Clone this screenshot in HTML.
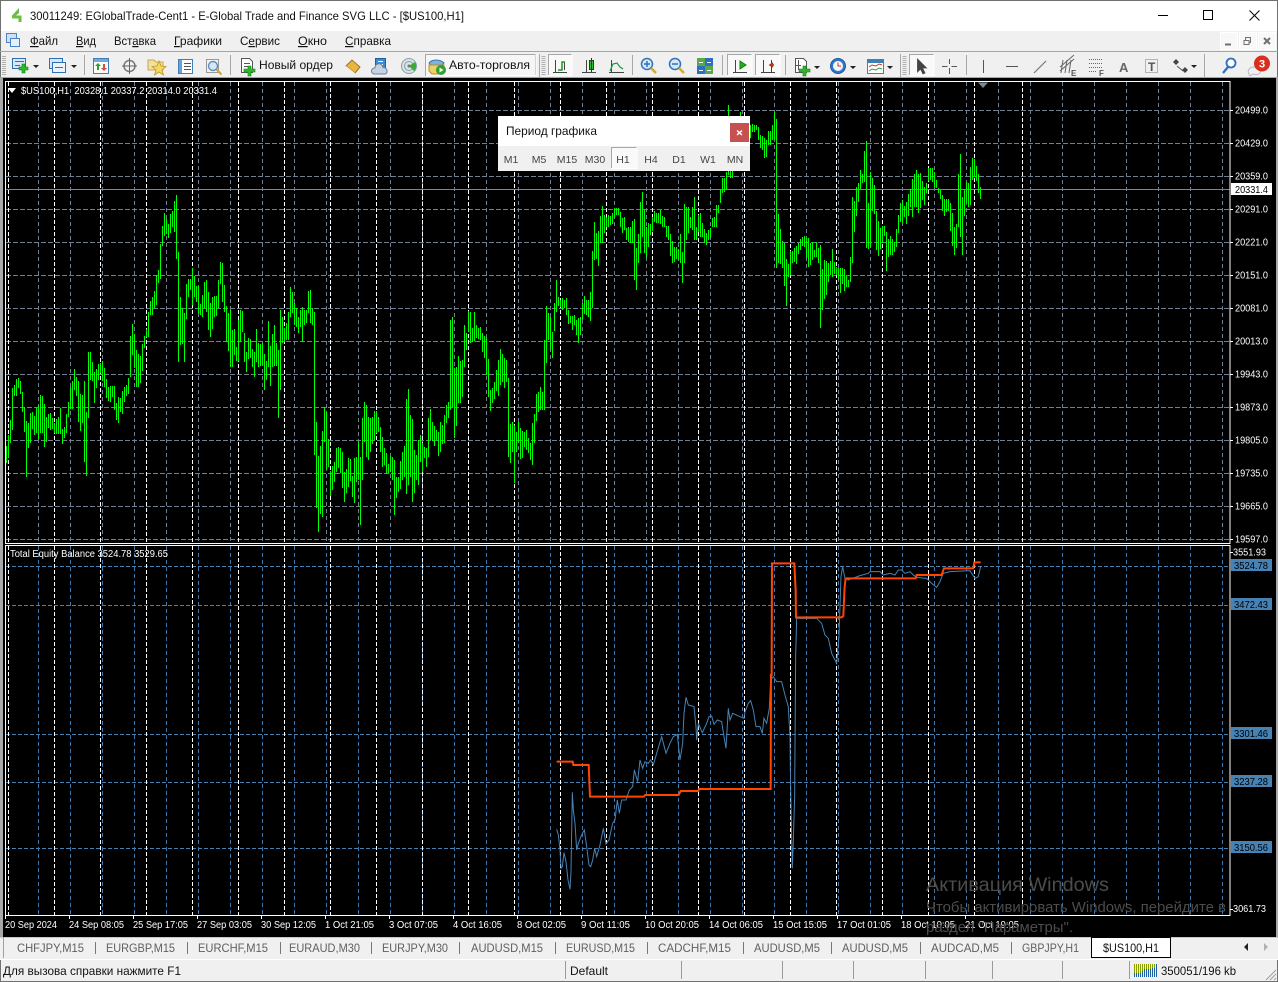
<!DOCTYPE html>
<html lang="ru">
<head>
<meta charset="utf-8">
<title>MetaTrader</title>
<style>
html,body{margin:0;padding:0;background:#f0f0f0;width:1278px;height:982px;overflow:hidden}
svg{display:block;position:absolute;left:0;top:0}
text{font-family:"Liberation Sans","Noto Sans CJK SC",sans-serif;white-space:pre}
.m{font-size:12px;fill:#111}
.p{font-size:10px;fill:#fff}
.k{font-size:10px;fill:#000}
.tab{font-size:12px;fill:#606060}
.per{font-size:10.5px;fill:#444;text-anchor:middle}
.ar{fill:#222}
</style>
</head>
<body>
<svg width="1278" height="982" viewBox="0 0 1278 982" xmlns="http://www.w3.org/2000/svg">
<!-- window chrome -->
<rect width="1278" height="982" fill="#f0f0f0"/>
<rect width="1278" height="31" fill="#fff"/>
<rect width="1278" height="1" fill="#707070"/>
<rect width="1" height="982" fill="#707070"/>
<rect x="1277" width="1" height="982" fill="#707070"/>
<path d="M12 15.500L19 8v5l-3 2.500h5.500V22h-3v-3.500H12z" fill="#6cbe45"/>
<text x="30" y="20" class="m" font-size="12" textLength="434" lengthAdjust="spacingAndGlyphs">30011249: EGlobalTrade-Cent1 - E-Global Trade and Finance SVG LLC - [$US100,H1]</text>
<path d="M1158 15.500h10" stroke="#000"/>
<rect x="1203.500" y="10.500" width="9" height="9" fill="none" stroke="#000"/>
<path d="M1249.500 10.500l10 10M1259.500 10.500l-10 10" stroke="#000"/>
<!-- menu -->
<rect x="6.500" y="33.500" width="10" height="9" fill="#cfe0f4" stroke="#4b82c4"/>
<rect x="10.500" y="38.500" width="9" height="8" fill="#e6f0fb" stroke="#4b82c4"/>
<g class="m">
<text x="30" y="45" class="m" textLength="28" lengthAdjust="spacingAndGlyphs"><tspan text-decoration="underline">Ф</tspan>айл</text>
<text x="76" y="45" class="m" textLength="20" lengthAdjust="spacingAndGlyphs"><tspan text-decoration="underline">В</tspan>ид</text>
<text x="114" y="45" class="m" textLength="42" lengthAdjust="spacingAndGlyphs">Вст<tspan text-decoration="underline">а</tspan>вка</text>
<text x="174" y="45" class="m" textLength="48" lengthAdjust="spacingAndGlyphs"><tspan text-decoration="underline">Г</tspan>рафики</text>
<text x="240" y="45" class="m" textLength="40" lengthAdjust="spacingAndGlyphs">С<tspan text-decoration="underline">е</tspan>рвис</text>
<text x="298" y="45" class="m" textLength="29" lengthAdjust="spacingAndGlyphs"><tspan text-decoration="underline">О</tspan>кно</text>
<text x="345" y="45" class="m" textLength="46" lengthAdjust="spacingAndGlyphs"><tspan text-decoration="underline">С</tspan>правка</text>
</g>
<g fill="#f8f8f8" stroke="#fff"><rect x="1220.500" y="32.500" width="17" height="17"/><rect x="1239.500" y="32.500" width="17" height="17"/><rect x="1258.500" y="32.500" width="17" height="17"/></g>
<path d="M1225 44.500h6" stroke="#707070" stroke-width="2"/>
<rect x="1245.500" y="37.500" width="5" height="5" fill="none" stroke="#707070"/><rect x="1244" y="40.500" width="5" height="4" fill="#f8f8f8" stroke="#707070"/>
<path d="M1264 38l6 6M1270 38l-6 6" stroke="#707070" stroke-width="2"/>
<rect y="51" width="1278" height="1" fill="#a5a5a5"/>
<rect y="77" width="1278" height="1" fill="#a5a5a5"/>
<!-- toolbar separators & grips -->
<path d="M84.500 55v20M230.500 55v20M539.500 54v23M632.500 55v20M722.500 55v20M785.500 55v20M900.500 54v23M966.500 55v20M1204.500 54v23" stroke="#a8a8a8"/>
<path d="M4 56v20M543.500 56v20M904.500 56v20" stroke="#b0b0b0" stroke-width="4" stroke-dasharray="1 1"/>
<!-- pressed buttons -->
<g fill="#f9f9f9"><rect x="548" y="54" width="24" height="22"/><rect x="727" y="54" width="25" height="22"/><rect x="755" y="54" width="25" height="22"/><rect x="909" y="54" width="25" height="22"/></g>
<path d="M548.500 76V54.500H572M727.500 76V54.500H752M755.500 76V54.500H780M909.500 76V54.500H934" fill="none" stroke="#a8a8a8"/>
<path d="M548 75.500h24V54M727 75.500h25V54M755 75.500h25V54M909 75.500h25V54" fill="none" stroke="#fff"/>
<!-- new chart -->
<rect x="12.500" y="58.500" width="13" height="10" fill="#d8e7f7" stroke="#2f6fb5"/><path d="M15 61.500h9M15 65.500h5" stroke="#2f6fb5"/>
<path d="M22 64h3v3h3v3h-3v3h-3v-3h-3v-3h3z" fill="#2dbb2d" stroke="#0d7f0d" stroke-width=".6"/>
<path class="ar" d="M33 65h6l-3 3zM71 65h6l-3 3zM814 66h6l-3 3zM850 66h6l-3 3zM887 66h6l-3 3zM1191 65h6l-3 3z"/>
<!-- profiles -->
<rect x="49.500" y="58.500" width="13" height="10" fill="#d8e7f7" stroke="#2f6fb5"/><rect x="52.500" y="62.500" width="13" height="10" fill="#eaf2fb" stroke="#2f6fb5"/><path d="M55 67.500h8" stroke="#2f6fb5"/>
<!-- market watch -->
<rect x="93.500" y="58.500" width="15" height="15" fill="#fbfbfb" stroke="#3f7fb8"/><rect x="94" y="59" width="14" height="3" fill="#72a9dc"/><path d="M97 70v-4h-2l3-3 3 3h-2v4z" fill="#2aa52a"/><path d="M103 64v4h-2l3 3 3-3h-2v-4z" fill="#d8503c"/>
<!-- data window -->
<circle cx="129.500" cy="66" r="5.500" fill="none" stroke="#777" stroke-width="1.500"/><path d="M129.500 58v16M122 66h15" stroke="#666"/>
<!-- navigator -->
<path d="M148 60h6l2 2h7v8h-15z" fill="#f2dfa2" stroke="#c9a64e"/><path d="M159 61l2 5 5 .5-4 3.500 1.500 5-4.500-3-4.500 3 1.500-5-4-3.500 5-.5z" fill="#f6d95a" stroke="#b8962d" stroke-width=".8"/>
<!-- terminal -->
<rect x="178.500" y="59.500" width="14" height="14" fill="#fff" stroke="#3f7fb8"/><rect x="179" y="60" width="3" height="13" fill="#6aa2d8"/><path d="M184 63.500h7M184 66.500h7M184 69.500h7" stroke="#555"/>
<!-- tester -->
<rect x="206.500" y="59.500" width="12" height="13" fill="#f2f2f2" stroke="#999"/><circle cx="213" cy="66" r="4.500" fill="#d5e6f6" stroke="#5f8fb7" stroke-width="1.400"/><path d="M216.500 69.500l5 5" stroke="#c9a53a" stroke-width="2"/>
<!-- new order -->
<path d="M241.500 58.500h8l3 3v11h-11z" fill="#fff" stroke="#555"/><path d="M244 63.500h6M244 66.500h6M244 69.500h3" stroke="#555"/>
<path d="M248 66h3v3h4v3h-4v4h-3v-4h-4v-3h4z" fill="#2dbb2d" stroke="#0d7f0d" stroke-width=".6"/>
<text x="259" y="69" class="m" textLength="74" lengthAdjust="spacingAndGlyphs">Новый ордер</text>
<!-- editor book -->
<path d="M346 66l6-6 8 7-5 6z" fill="#e8b53f" stroke="#9a7520"/><path d="M346 66l9 7 0 1-9-7z" fill="#fff3c4"/>
<!-- cloud blue -->
<rect x="375.500" y="58.500" width="10" height="10" fill="#3d8ad6" stroke="#1f5f9f"/><path d="M378 61.500h5M378 64.500h5" stroke="#fff"/><path d="M374 74a3 3 0 0 1 1-6 4 4 0 0 1 8-.5 3.500 3.500 0 0 1 4 3.500 2.500 2.500 0 0 1-2 3z" fill="#c3d3e3" stroke="#6d8296"/>
<!-- signals -->
<circle cx="409" cy="66" r="7.500" fill="#d7e3e7" stroke="#8aa0a6"/><circle cx="409" cy="66" r="4.500" fill="none" stroke="#8aa0a6"/><path d="M409 66l5 5a7 7 0 0 0 1-9z" fill="#3aaa35"/><circle cx="409" cy="66" r="1.500" fill="#777"/>
<!-- auto-trading -->
<rect x="425.500" y="54.500" width="110" height="21" fill="#f6f6f6" stroke="#a8a8a8"/>
<path d="M536 54v22M426 75.500h110" stroke="#fff"/>
<path d="M429 63c3-4 11-4 15 0l-2 2h-11z" fill="#7fb2dd" stroke="#3c77aa"/><path d="M429 65h15v6l-4 3h-8l-3-3z" fill="#f0cf66" stroke="#b0932e"/><circle cx="441" cy="70" r="5" fill="#2fa12f"/><path d="M439.500 67.500l4 2.500-4 2.500z" fill="#fff"/>
<text x="449" y="69" class="m" textLength="81" lengthAdjust="spacingAndGlyphs">Авто-торговля</text>
<!-- bar / candle / line -->
<g fill="none" stroke="#444">
<path d="M555.500 60v13M553 72.500h14M564.500 62v8"/>
<path d="M586.500 60v13M582 72.500h14"/>
<path d="M611.500 60v13M609 72.500h15"/>
<path d="M735.500 60v13M733 72.500h14"/>
<path d="M763.500 60v13M761 72.500h14M771.500 60v13"/>
</g>
<path d="M558 70h4v-8h3" fill="none" stroke="#189a18" stroke-width="1.500"/>
<rect x="589.500" y="60.500" width="4" height="9" fill="#29c129" stroke="#333"/><path d="M591.500 58v14" stroke="#333"/>
<path d="M610 71l3-7 4-1 3 4 3 2" fill="none" stroke="#1c9a3a" stroke-width="1.200"/>
<path d="M740 61v8l6-4z" fill="#21b021" stroke="#0e7f0e"/>
<path d="M774 65l-4 0m3-2l-3 2 3 2" fill="none" stroke="#b03010" stroke-width="1.500"/>
<!-- zoom -->
<circle cx="647" cy="64" r="5.500" fill="#d6e8fa" stroke="#2f74b8" stroke-width="1.500"/><path d="M644 64h6M647 61v6" stroke="#2f74b8" stroke-width="1.500"/><path d="M651 68l5 5" stroke="#d0a935" stroke-width="2.500"/>
<circle cx="675" cy="64" r="5.500" fill="#d6e8fa" stroke="#2f74b8" stroke-width="1.500"/><path d="M672 64h6" stroke="#2f74b8" stroke-width="1.500"/><path d="M679 68l5 5" stroke="#d0a935" stroke-width="2.500"/>
<!-- tile -->
<rect x="697" y="58" width="8" height="8" fill="#5aa84a"/><rect x="705" y="58" width="8" height="8" fill="#2d6fc0"/><rect x="697" y="66" width="8" height="8" fill="#2d6fc0"/><rect x="705" y="66" width="8" height="8" fill="#5aa84a"/>
<path d="M699 62.500h4M707 62.500h4M699 70.500h4M707 70.500h4" stroke="#fff"/>
<!-- indicators -->
<path d="M795.500 58.500h8l3 3v11h-11z" fill="#fff" stroke="#555"/><path d="M798.500 60v10M796 65.500h5" stroke="#555"/>
<path d="M803 66h3v3h4v3h-4v4h-3v-4h-4v-3h4z" fill="#2dbb2d" stroke="#0d7f0d" stroke-width=".6"/>
<!-- clock -->
<circle cx="838" cy="66" r="7.500" fill="#2f78c8" stroke="#1d5a9e"/><circle cx="838" cy="66" r="5" fill="#f4f8fc"/><path d="M838 62.500V66h3" fill="none" stroke="#c33" stroke-width="1"/>
<!-- templates -->
<rect x="867.500" y="59.500" width="16" height="14" fill="#fff" stroke="#3f7fb8"/><rect x="868" y="60" width="15" height="3" fill="#3f7fb8"/><path d="M869 67l3-2 4 1 3-2 3 1" fill="none" stroke="#c33"/><path d="M869 71l3-2 4 1 3-2 3 1" fill="none" stroke="#2a2"/>
<!-- cursor -->
<path d="M917.500 59v13l3-3 2.500 5 2-1-2.500-5h4z" fill="#444" stroke="#444" stroke-width=".8"/>
<!-- crosshair -->
<path d="M949.500 59v5M949.500 68v6M942 66.500h5.500M951.500 66.500h5.500" stroke="#555"/>
<!-- line tools -->
<path d="M983.500 60v13" stroke="#555"/>
<path d="M1006 66.500h12" stroke="#555"/>
<path d="M1034 73l12-12" stroke="#777" stroke-width="1.200"/>
<path d="M1060 71l14-12M1060 67l14-12M1063 60l-2 13M1067 60l-2 13M1071 60l-2 13" stroke="#666" fill="none"/>
<text x="1071" y="76" font-size="8" font-weight="bold" fill="#555">E</text>
<path d="M1089 59.500h13M1089 63.500h13M1089 67.500h13M1089 71.500h8" stroke="#666" stroke-dasharray="1 1"/>
<text x="1099" y="76" font-size="8" font-weight="bold" fill="#555">F</text>
<text x="1119" y="72" font-size="13" font-weight="bold" fill="#666">A</text>
<rect x="1145.500" y="59.500" width="12" height="13" fill="none" stroke="#777" stroke-dasharray="1 1"/>
<text x="1148" y="71" font-size="12" font-weight="bold" fill="#555">T</text>
<path d="M1173 62l3-3 3 3-3 3zM1182 70l3-3 3 3-3 3z" fill="#444"/><path d="M1177 66l6 5" stroke="#555"/>
<!-- search & notification -->
<circle cx="1231" cy="63" r="4.500" fill="#fff" stroke="#2a6fc0" stroke-width="1.800"/><path d="M1228 67l-5 6" stroke="#2a6fc0" stroke-width="2.200"/>
<path d="M1249 74c-2-3 0-7 5-7s8 3 6 6c-2 2-5 2-7 1l-3 2z" fill="#eef0f1" stroke="#b5bcc0"/>
<circle cx="1262" cy="63.500" r="8" fill="#d92e1e"/>
<text x="1262" y="67.500" font-size="11" font-weight="bold" fill="#fff" text-anchor="middle">3</text>

<!-- chart area -->
<rect x="3" y="78" width="1273" height="859" fill="#000"/>
<rect x="0" y="78" width="3" height="859" fill="#a8a8a8"/>
<rect x="1276" y="78" width="2" height="859" fill="#a8a8a8"/>
<g fill="none" stroke-width="1">
<path stroke="#708090" stroke-dasharray="4 3" d="M38.500 82v461m32-461v461m32-461v461m32-461v461m32-461v461m32-461v461m32-461v461m32-461v461m32-461v461m32-461v461m32-461v461m32-461v461m32-461v461m32-461v461m32-461v461m32-461v461m32-461v461m32-461v461m32-461v461m32-461v461m32-461v461m32-461v461m32-461v461m32-461v461m32-461v461m32-461v461m32-461v461m32-461v461m32-461v461m32-461v461m32-461v461m32-461v461m32-461v461m32-461v461m32-461v461m32-461v461m32-461v461m32-461v461"/>
<path stroke="#708090" stroke-dasharray="5 2" d="M6 110.500h1224M6 143.500h1224M6 176.500h1224M6 209.500h1224M6 242.500h1224M6 275.500h1224M6 308.500h1224M6 341.500h1224M6 374.500h1224M6 407.500h1224M6 440.500h1224M6 473.500h1224M6 506.500h1224M6 539.500h1224"/>
<path stroke="#fff" stroke-dasharray="4 2" d="M8.500 82v461m46-461v461m46-461v461m46-461v461m46-461v461m46-461v461m46-461v461m46-461v461m46-461v461m46-461v461m46-461v461m46-461v461m46-461v461m46-461v461m46-461v461m46-461v461m46-461v461m46-461v461m46-461v461m46-461v461m46-461v461m46-461v461m48-461v461"/>
<path stroke="#3f78a8" stroke-dasharray="4 3" d="M38.500 546v369m32-369v369m32-369v369m32-369v369m32-369v369m32-369v369m32-369v369m32-369v369m32-369v369m32-369v369m32-369v369m32-369v369m32-369v369m32-369v369m32-369v369m32-369v369m32-369v369m32-369v369m32-369v369m32-369v369m32-369v369m32-369v369m32-369v369m32-369v369m32-369v369m32-369v369m32-369v369m32-369v369m32-369v369m32-369v369m32-369v369m32-369v369m32-369v369m32-369v369m32-369v369m32-369v369m32-369v369m32-369v369"/>
<path stroke="#4682b4" stroke-dasharray="4 2" d="M6 566.500h1224M6 605.500h1224M6 734.500h1224M6 782.500h1224M6 848.500h1224"/>
<path stroke="#fff" stroke-dasharray="4 2" d="M8.500 546v369m46-369v369m46-369v369m46-369v369m46-369v369m46-369v369m46-369v369m46-369v369m46-369v369m46-369v369m46-369v369m46-369v369m46-369v369m46-369v369m46-369v369m46-369v369m46-369v369m46-369v369m46-369v369m46-369v369m46-369v369m46-369v369m48-369v369"/>
<path stroke="#778899" d="M6 189.500h1224"/>
</g>
<!-- price bars -->
<path transform="translate(.5 0)" fill="none" stroke="#00ff00" stroke-width="1" shape-rendering="crispEdges" d="M6 446V463M8 435V458M10 420V443M12 388V430M14 385V396M16 379V396M18 378V388M20 381V394M22 392V412M24 407V432M26 421V477M28 423V448M30 413V443M32 412V429M34 416V435M36 408V433M38 405V440M40 395V433M42 396V433M44 404V447M46 417V442M48 414V428M50 413V430M52 418V429M54 423V433M56 419V434M58 417V434M60 408V434M62 429V444M64 427V438M66 414V433M68 402V417M70 387V409M72 381V409M74 369V390M76 377V396M78 381V422M80 394V431M82 395V423M84 381V462M86 412V476M88 352V418M90 352V380M92 362V381M94 372V403M96 369V388M98 364V380M100 363V373M102 361V381M104 368V387M106 379V398M108 387V401M110 386V402M112 386V397M114 386V410M116 403V420M118 397V423M120 398V412M122 391V414M124 387V402M126 385V396M128 378V394M130 336V377M132 324V355M134 334V368M136 350V387M138 354V387M140 356V383M142 344V371M144 336V348M146 329V337M148 312V337M150 301V315M152 297V315M154 291V308M156 275V305M158 270V283M160 244V279M162 226V246M164 213V236M166 219V234M168 224V238M170 214V233M172 211V227M174 201V232M176 195V259M178 252V362M180 297V345M182 308V344M184 313V362M186 284V319M188 279V297M190 279V290M192 268V305M194 276V297M196 286V302M198 286V313M200 304V315M202 295V317M204 282V308M206 280V312M208 292V330M210 303V337M212 297V329M214 296V317M216 296V316M218 280V308M220 262V284M222 263V302M224 285V312M226 306V342M228 313V351M230 310V367M232 330V367M234 329V355M236 347V361M238 320V361M240 310V342M242 311V332M244 333V362M246 352V372M248 338V359M250 339V358M252 349V367M254 352V377M256 329V362M258 343V367M260 344V366M262 343V365M264 354V390M266 361V380M268 321V367M270 346V386M272 334V367M274 325V366M276 343V366M278 350V418M280 310V390M282 317V343M284 328V342M286 323V340M288 312V340M290 287V317M292 292V313M294 303V325M296 308V327M298 317V333M300 310V327M302 307V342M304 310V325M306 310V323M308 291V313M310 290V323M312 308V325M314 312V455M316 422V508M318 456V532M320 446V514M322 431V517M324 407V442M326 412V469M328 439V467M330 471V496M332 466V490M334 462V482M336 448V472M338 447V468M340 448V473M342 452V488M344 472V502M346 469V493M348 458V487M350 459V481M352 476V497M354 458V503M356 457V482M358 441V480M360 457V525M362 418V480M364 402V442M366 405V457M368 417V460M370 418V452M372 417V444M374 411V440M376 411V433M378 417V432M380 427V452M382 437V467M384 448V465M386 453V474M388 464V473M390 456V472M392 457V480M394 460V515M396 477V498M398 477V492M400 461V489M402 452V480M404 446V477M406 399V494M408 389V485M410 415V477M412 419V502M414 450V493M416 455V480M418 440V485M420 435V462M422 443V472M424 447V458M426 448V467M428 418V457M430 409V440M432 422V441M434 426V446M436 430V440M438 432V456M440 422V452M442 425V444M444 415V443M446 405V423M448 402V418M450 320V410M452 317V408M454 368V438M456 367V426M458 356V403M460 361V403M462 360V397M464 325V367M466 333V350M468 311V332M470 312V343M472 328V342M474 312V341M476 325V338M478 328V339M480 327V340M482 333V352M484 336V358M486 337V375M488 359V397M490 390V411M492 388V403M494 382V399M496 370V391M498 360V396M500 349V385M502 354V382M504 358V388M506 360V382M508 378V457M510 424V463M512 422V452M514 425V483M516 432V452M518 422V443M520 428V459M522 431V458M524 432V447M526 430V450M528 438V453M530 443V460M532 423V465M534 414V443M536 394V421M538 392V412M540 387V410M542 392V410M544 340V410M546 306V363M548 313V340M550 317V350M552 332V358M554 303V331M556 280V312M558 297V306M560 300V307M562 298V310M564 300V308M566 298V315M568 310V324M570 316V323M572 316V330M574 315V325M576 320V335M578 318V343M580 317V335M582 303V320M584 296V314M586 300V315M588 300V317M590 292V321M592 251V308M594 222V260M596 233V259M598 231V266M600 216V243M602 206V243M604 215V233M606 217V227M608 215V227M610 216V225M612 213V224M614 208V218M616 208V215M618 208V215M620 212V227M622 218V233M624 217V230M626 228V240M628 227V242M630 227V243M632 221V243M634 219V280M636 248V290M638 234V263M640 202V253M642 192V237M644 210V253M646 227V258M648 223V247M650 224V235M652 217V231M654 211V222M656 213V223M658 213V223M660 210V224M662 216V227M664 217V227M666 226V237M668 226V240M670 234V256M672 241V263M674 247V262M676 247V259M678 249V260M680 234V263M682 252V283M684 204V263M686 207V240M688 207V233M690 217V228M692 207V230M694 197V240M696 227V240M698 215V232M700 213V237M702 223V237M704 229V243M706 233V245M708 230V240M710 228V238M712 218V227M714 217V227M716 205V227M718 205V213M720 190V203M722 178V193M724 178V192M726 172V190M728 105V175M730 150V178M732 150V178M734 130V160M736 125V150M738 120V150M740 112V140M742 118V150M744 125V150M746 125V150M748 125V150M750 125V138M752 124V132M754 125V132M756 125V130M758 127V140M760 135V148M762 136V150M764 138V158M766 140V157M768 131V145M770 131V145M772 125V140M774 112V140M776 119V268M778 214V263M780 229V264M782 241V268M784 243V286M786 259V306M788 264V277M790 251V275M792 251V263M794 248V262M796 246V264M798 243V254M800 239V250M802 237V246M804 236V247M806 238V258M808 238V267M810 243V265M812 242V260M814 250V257M816 242V257M818 248V263M820 245V328M822 269V310M824 260V299M826 261V295M828 263V282M830 261V275M832 249V277M834 262V274M836 267V275M838 268V280M840 268V293M842 268V284M844 269V291M846 276V287M848 280V287M850 257V282M852 197V263M854 201V232M856 187V216M858 183V202M860 170V189M862 174V183M864 151V182M866 141V248M868 203V249M870 172V248M872 178V211M874 185V214M876 211V250M878 221V256M880 228V249M882 226V243M884 226V236M886 232V271M888 239V257M890 236V255M892 239V255M894 242V252M896 229V247M898 215V233M900 203V222M902 200V223M904 206V217M906 202V224M908 194V216M910 189V207M912 179V217M914 174V207M916 170V207M918 174V213M920 173V208M922 181V200M924 187V205M926 183V193M928 168V181M930 168V180M932 168V182M934 172V187M936 180V188M938 188V193M940 190V199M942 195V211M944 199V216M946 199V212M948 199V211M950 203V231M952 213V246M954 227V255M956 224V248M958 174V227M960 154V237M962 197V255M964 190V216M966 182V203M968 183V207M970 167V205M972 158V180M974 159V177M976 166V181M978 174V193M980 187V199"/>
<!-- indicator lines -->
<g transform="translate(540 540) scale(.3333)" fill="none" stroke-linejoin="miter">
<path stroke="#4682b4" stroke-width="3" d="M50 868L55 885 60 930 63 985 67 980 72 938 78 965 84 1020 90 1048 93 995 97 757 100 810 105 850 110 930 115 910 125 885 133 870 140 920 147 975 152 980 158 960 164 925 170 950 180 915 190 865 198 912 207 900 218 850 225 840 232 780 238 820 245 780 258 780 268 750 278 740 283 690 293 725 300 660 308 685 315 665 325 670 332 660 340 675 350 640 365 590 378 640 390 610 400 590 412 583 420 660 428 610 432 520 438 472 445 495 462 500 468 560 470 600 475 550 487 578 500 550 507 530 515 528 522 553 532 540 545 545 552 590 558 625 565 505 570 540 578 520 600 530 612 535 615 515 625 490 632 482 640 510 648 560 660 560 667 580 672 535 680 550 688 505 692 420 700 410 710 425 725 425 735 465 745 500 750 590 752 750 757 985 760 905 764 770 767 350 770 235 830 235 845 250 855 285 865 295 875 340 890 370 897 290 903 110 908 80 915 115 925 120 960 107 985 100 990 95 1020 95 1030 105 1050 100 1065 105 1075 90 1085 90 1095 100 1110 95 1120 105 1130 112 1160 115 1175 130 1190 142 1200 125 1210 100 1230 95 1290 92 1305 115 1315 110 1322 80"/>
<path stroke="#ff4500" stroke-width="6" d="M50 665H98L100 675H146L150 770H312L316 765H416L422 753H475L478 747H692L693 405H695L696 70H763L767 150 768 232H905L910 228 914 140 917 115H1127L1130 105H1205L1212 85H1300L1303 67H1322"/>
</g>
<!-- frames -->
<g fill="none" stroke="#fff">
<rect x="5.500" y="81.500" width="1224.500" height="462"/>
<rect x="5.500" y="545.500" width="1224.500" height="370"/>
</g>
<path d="M978 82.500h10l-5 5.500z" fill="#778899"/>
<!-- ticks -->
<path stroke="#fff" d="M1230 110.500h3M1230 143.500h3M1230 176.500h3M1230 209.500h3M1230 242.500h3M1230 275.500h3M1230 308.500h3M1230 341.500h3M1230 374.500h3M1230 407.500h3M1230 440.500h3M1230 473.500h3M1230 506.500h3M1230 539.500h3M1230 552.500h3M1230 909.500h3M5.500 916v3M69.500 916v3M133.500 916v3M197.500 916v3M261.500 916v3M325.500 916v3M389.500 916v3M453.500 916v3M517.500 916v3M581.500 916v3M645.500 916v3M709.500 916v3M773.500 916v3M837.500 916v3M901.500 916v3M965.500 916v3"/>
<!-- chart headers -->
<path d="M8 88h8l-4 5z" fill="#fff"/>
<text x="21" y="94" class="p" textLength="196" lengthAdjust="spacingAndGlyphs">$US100,H1  20328.1 20337.2 20314.0 20331.4</text>
<text x="10" y="557" class="p" textLength="158" lengthAdjust="spacingAndGlyphs">Total Equity Balance 3524.78 3529.65</text>
<!-- price labels -->
<g class="p">
<text x="1235" y="113.500" class="p" textLength="33" lengthAdjust="spacingAndGlyphs">20499.0</text>
<text x="1235" y="146.500" class="p" textLength="33" lengthAdjust="spacingAndGlyphs">20429.0</text>
<text x="1235" y="179.500" class="p" textLength="33" lengthAdjust="spacingAndGlyphs">20359.0</text>
<text x="1235" y="212.500" class="p" textLength="33" lengthAdjust="spacingAndGlyphs">20291.0</text>
<text x="1235" y="245.500" class="p" textLength="33" lengthAdjust="spacingAndGlyphs">20221.0</text>
<text x="1235" y="278.500" class="p" textLength="33" lengthAdjust="spacingAndGlyphs">20151.0</text>
<text x="1235" y="311.500" class="p" textLength="33" lengthAdjust="spacingAndGlyphs">20081.0</text>
<text x="1235" y="344.500" class="p" textLength="33" lengthAdjust="spacingAndGlyphs">20013.0</text>
<text x="1235" y="377.500" class="p" textLength="33" lengthAdjust="spacingAndGlyphs">19943.0</text>
<text x="1235" y="410.500" class="p" textLength="33" lengthAdjust="spacingAndGlyphs">19873.0</text>
<text x="1235" y="443.500" class="p" textLength="33" lengthAdjust="spacingAndGlyphs">19805.0</text>
<text x="1235" y="476.500" class="p" textLength="33" lengthAdjust="spacingAndGlyphs">19735.0</text>
<text x="1235" y="509.500" class="p" textLength="33" lengthAdjust="spacingAndGlyphs">19665.0</text>
<text x="1235" y="542.500" class="p" textLength="33" lengthAdjust="spacingAndGlyphs">19597.0</text>
<text x="1233" y="555.500" class="p" textLength="33" lengthAdjust="spacingAndGlyphs">3551.93</text>
<text x="1233" y="912" class="p" textLength="33" lengthAdjust="spacingAndGlyphs">3061.73</text>
</g>
<rect x="1231" y="183" width="41" height="12" fill="#fff"/>
<text x="1235" y="193" class="k" textLength="33" lengthAdjust="spacingAndGlyphs">20331.4</text>
<g fill="#4682b4"><rect x="1231" y="559" width="41" height="12"/><rect x="1231" y="598" width="41" height="12"/><rect x="1231" y="727" width="41" height="12"/><rect x="1231" y="775" width="41" height="12"/><rect x="1231" y="841" width="41" height="12"/></g>
<text x="1234" y="569" class="k" textLength="34" lengthAdjust="spacingAndGlyphs">3524.78</text>
<text x="1234" y="608" class="k" textLength="34" lengthAdjust="spacingAndGlyphs">3472.43</text>
<text x="1234" y="737" class="k" textLength="34" lengthAdjust="spacingAndGlyphs">3301.46</text>
<text x="1234" y="785" class="k" textLength="34" lengthAdjust="spacingAndGlyphs">3237.28</text>
<text x="1234" y="851" class="k" textLength="34" lengthAdjust="spacingAndGlyphs">3150.56</text>
<!-- time labels -->
<text x="5" y="928" class="p" textLength="52" lengthAdjust="spacingAndGlyphs">20 Sep 2024</text>
<text x="69" y="928" class="p" textLength="55" lengthAdjust="spacingAndGlyphs">24 Sep 08:05</text>
<text x="133" y="928" class="p" textLength="55" lengthAdjust="spacingAndGlyphs">25 Sep 17:05</text>
<text x="197" y="928" class="p" textLength="55" lengthAdjust="spacingAndGlyphs">27 Sep 03:05</text>
<text x="261" y="928" class="p" textLength="55" lengthAdjust="spacingAndGlyphs">30 Sep 12:05</text>
<text x="325" y="928" class="p" textLength="49" lengthAdjust="spacingAndGlyphs">1 Oct 21:05</text>
<text x="389" y="928" class="p" textLength="49" lengthAdjust="spacingAndGlyphs">3 Oct 07:05</text>
<text x="453" y="928" class="p" textLength="49" lengthAdjust="spacingAndGlyphs">4 Oct 16:05</text>
<text x="517" y="928" class="p" textLength="49" lengthAdjust="spacingAndGlyphs">8 Oct 02:05</text>
<text x="581" y="928" class="p" textLength="49" lengthAdjust="spacingAndGlyphs">9 Oct 11:05</text>
<text x="645" y="928" class="p" textLength="54" lengthAdjust="spacingAndGlyphs">10 Oct 20:05</text>
<text x="709" y="928" class="p" textLength="54" lengthAdjust="spacingAndGlyphs">14 Oct 06:05</text>
<text x="773" y="928" class="p" textLength="54" lengthAdjust="spacingAndGlyphs">15 Oct 15:05</text>
<text x="837" y="928" class="p" textLength="54" lengthAdjust="spacingAndGlyphs">17 Oct 01:05</text>
<text x="901" y="928" class="p" textLength="54" lengthAdjust="spacingAndGlyphs">18 Oct 10:05</text>
<text x="965" y="928" class="p" textLength="54" lengthAdjust="spacingAndGlyphs">21 Oct 19:05</text>
<!-- watermark -->
<text x="926" y="891" font-size="19.500" fill="#4c4c4c" textLength="183" lengthAdjust="spacingAndGlyphs">Активация Windows</text>
<text x="926" y="912" font-size="14.500" fill="#4c4c4c" textLength="300" lengthAdjust="spacingAndGlyphs">Чтобы активировать Windows, перейдите в</text>
<text x="926" y="932" font-size="14.500" fill="#4c4c4c" textLength="147" lengthAdjust="spacingAndGlyphs">раздел "Параметры".</text>
<!-- period dialog -->
<rect x="498" y="116" width="252" height="30" fill="#fff"/>
<rect x="498" y="146" width="252" height="25" fill="#f0f0f0"/>
<text x="506" y="135" class="m" textLength="91" lengthAdjust="spacingAndGlyphs">Период графика</text>
<rect x="730" y="123" width="19" height="19" fill="#c75050"/>
<path d="M737 130.500l5 4.500M742 130.500l-5 4.500" stroke="#fff" stroke-width="1.500"/>
<rect x="611" y="147" width="26" height="22" fill="#f9f9f9"/>
<path d="M611.500 169V147.500H637" fill="none" stroke="#a8a8a8"/><path d="M611 168.500h26V147" fill="none" stroke="#fff"/>
<text x="511" y="163" class="per">M1</text><text x="539" y="163" class="per">M5</text><text x="567" y="163" class="per">M15</text><text x="595" y="163" class="per">M30</text><text x="623" y="163" class="per">H1</text><text x="651" y="163" class="per">H4</text><text x="679" y="163" class="per">D1</text><text x="708" y="163" class="per">W1</text><text x="735" y="163" class="per">MN</text>
<!-- tabs -->
<rect x="0" y="937" width="1278" height="22" fill="#f0f0f0"/>
<rect y="937" width="1278" height="1" fill="#c8c8c8"/>
<path d="M3.500 937v21" stroke="#a0a0a0"/>
<path d="M95.500 942v12M187.500 942v12M280.500 942v12M371.500 942v12M459.500 942v12M555.500 942v12M647.500 942v12M743.500 942v12M831.500 942v12M920.500 942v12M1011.500 942v12" stroke="#777"/>
<text x="17" y="952" class="tab" textLength="67" lengthAdjust="spacingAndGlyphs">CHFJPY,M15</text>
<text x="106" y="952" class="tab" textLength="69" lengthAdjust="spacingAndGlyphs">EURGBP,M15</text>
<text x="198" y="952" class="tab" textLength="70" lengthAdjust="spacingAndGlyphs">EURCHF,M15</text>
<text x="289" y="952" class="tab" textLength="71" lengthAdjust="spacingAndGlyphs">EURAUD,M30</text>
<text x="382" y="952" class="tab" textLength="66" lengthAdjust="spacingAndGlyphs">EURJPY,M30</text>
<text x="471" y="952" class="tab" textLength="72" lengthAdjust="spacingAndGlyphs">AUDUSD,M15</text>
<text x="566" y="952" class="tab" textLength="69" lengthAdjust="spacingAndGlyphs">EURUSD,M15</text>
<text x="658" y="952" class="tab" textLength="73" lengthAdjust="spacingAndGlyphs">CADCHF,M15</text>
<text x="754" y="952" class="tab" textLength="66" lengthAdjust="spacingAndGlyphs">AUDUSD,M5</text>
<text x="842" y="952" class="tab" textLength="66" lengthAdjust="spacingAndGlyphs">AUDUSD,M5</text>
<text x="931" y="952" class="tab" textLength="68" lengthAdjust="spacingAndGlyphs">AUDCAD,M5</text>
<text x="1022" y="952" class="tab" textLength="57" lengthAdjust="spacingAndGlyphs">GBPJPY,H1</text>
<rect x="1091.500" y="937.500" width="79" height="20" fill="#fff" stroke="#000"/>
<text x="1103" y="952" class="m" textLength="56" lengthAdjust="spacingAndGlyphs">$US100,H1</text>
<path d="M1248 943v8l-4-4z" fill="#222"/><path d="M1264 943v8l4-4z" fill="#b0b0b0"/>
<!-- status bar -->
<rect y="959" width="1278" height="1" fill="#fff"/>
<rect y="981" width="1278" height="1" fill="#707070"/>
<text x="3" y="975" class="m" textLength="178" lengthAdjust="spacingAndGlyphs">Для вызова справки нажмите F1</text>
<text x="570" y="975" class="m" textLength="38" lengthAdjust="spacingAndGlyphs">Default</text>
<path d="M565.500 961v18M681.500 961v18M782.500 961v18M853.500 961v18M925.500 961v18M992.500 961v18M1062.500 961v18M1129.500 961v18" stroke="#9a9a9a"/>
<path d="M1134.500 977v-4M1136.500 977v-4M1138.500 977v-4M1140.500 977v-4M1142.500 977v-6M1144.500 977v-8M1146.500 977v-8M1148.500 977v-8M1150.500 977v-8M1152.500 977v-9M1154.500 977v-9M1156.500 977v-13" stroke="#1f5fa0"/>
<path d="M1134.500 973v-9M1136.500 973v-9M1138.500 973v-9M1140.500 973v-9M1142.500 971v-7M1144.500 969v-5M1146.500 969v-5M1148.500 969v-5M1150.500 969v-5M1152.500 968v-4M1154.500 968v-4" stroke="#8aa000"/>
<text x="1161" y="975" class="m" textLength="75" lengthAdjust="spacingAndGlyphs">350051/196 kb</text>
<path d="M1266 980l10-10M1270 980l6-6M1274 980l2-2" stroke="#a0a0a0"/>
</svg>
</body>
</html>
